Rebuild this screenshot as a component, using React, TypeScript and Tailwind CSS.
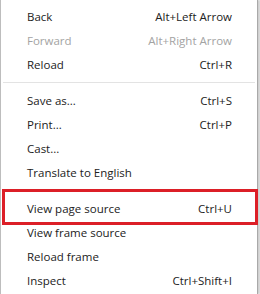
import React from 'react';

type Item = { label: string; shortcut?: string; disabled?: boolean };

const groups: Item[][] = [
  [
    { label: 'Back', shortcut: 'Alt+Left Arrow' },
    { label: 'Forward', shortcut: 'Alt+Right Arrow', disabled: true },
    { label: 'Reload', shortcut: 'Ctrl+R' },
  ],
  [
    { label: 'Save as...', shortcut: 'Ctrl+S' },
    { label: 'Print...', shortcut: 'Ctrl+P' },
    { label: 'Cast...' },
    { label: 'Translate to English' },
  ],
];

const tail: Item[] = [
  { label: 'View frame source' },
  { label: 'Reload frame' },
  { label: 'Inspect', shortcut: 'Ctrl+Shift+I' },
];

const Row = ({ item }: { item: Item }) => (
  <div
    className={`h-[24px] flex items-center justify-between pl-[26px] pr-[25px] ${
      item.disabled ? 'text-[#a3a3a3]' : 'text-[#222222]'
    }`}
  >
    <span>{item.label}</span>
    {item.shortcut && <span>{item.shortcut}</span>}
  </div>
);

const Separator = () => <div className="h-px bg-[#e3e3e3] mx-[2px]" />;

export default function App() {
  return (
    <div
      className="w-[260px] h-[294px] bg-[#f1f1f1] overflow-hidden text-[11.5px] leading-none"
      style={{ fontFamily: '"Open Sans", "Noto Sans", Arial, sans-serif' }}
    >
      <div className="w-[258px] h-full bg-white border-l border-[#bdbdbd] border-r border-r-[#a9a9a9] shadow-[2px_0_2px_rgba(0,0,0,0.15)] pt-[5px]">
        {groups[0].map((it) => (
          <Row key={it.label} item={it} />
        ))}
        <div className="pt-[5px] pb-[6px]">
          <Separator />
        </div>
        {groups[1].map((it) => (
          <Row key={it.label} item={it} />
        ))}
        {/* highlighted row */}
        <div className="relative">
          <div className="pt-[5px] pb-[6px]">
            <Separator />
          </div>
          <Row item={{ label: 'View page source', shortcut: 'Ctrl+U' }} />
          <div className="absolute left-[1px] right-[-1px] top-[4px] bottom-[-4px] border-[3px] border-[#dc1f27]" />
        </div>
        {tail.map((it) => (
          <Row key={it.label} item={it} />
        ))}
      </div>
    </div>
  );
}
